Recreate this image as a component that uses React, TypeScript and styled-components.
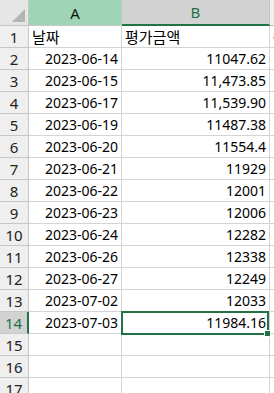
import React from 'react';
import styled, { createGlobalStyle, css } from 'styled-components';

const Colours = {
  grid: '#d4d4d4',
  headerBg: '#efefef',
  headerBorder: '#c6c6c6',
  selectedHeader: '#d2d2d2',
  green: '#217346',
  greenHeader: '#9fd5b7',
  text: '#000',
};

const GlobalStyle = createGlobalStyle`
  html, body {
    margin: 0;
    padding: 0;
    background: #fff;
    overflow: hidden;
  }
  body {
    font-family: "Noto Sans", "Noto Sans CJK KR", sans-serif;
  }
`;

const SSheet = styled.div`
  display: grid;
  grid-template-columns: 29px 93px 148px 1fr;
  grid-auto-rows: 22px;
  grid-template-rows: 26px;
  width: 274px;
  height: 393px;
  overflow: hidden;
  font-size: 14px;
  color: ${Colours.text};
`;

const SCorner = styled.div`
  position: relative;
  background: #e6e6e6;
  border-right: 1px solid ${Colours.headerBorder};
  border-bottom: 1px solid ${Colours.headerBorder};

  &::after {
    content: '';
    position: absolute;
    right: 3px;
    bottom: 3px;
    width: 0;
    height: 0;
    border-left: 13px solid transparent;
    border-bottom: 13px solid #b4b4b4;
  }
`;

type ColHeadProps = { $state?: 'active' | 'selected' };
const SColHead = styled.div<ColHeadProps>`
  display: flex;
  align-items: center;
  justify-content: center;
  background: ${Colours.headerBg};
  border-right: 1px solid ${Colours.headerBorder};
  border-bottom: 1px solid ${Colours.headerBorder};
  font-size: 15px;
  color: #222;

  ${({ $state }) =>
    $state === 'active' &&
    css`
      background: ${Colours.greenHeader};
      color: #111;
    `}

  ${({ $state }) =>
    $state === 'selected' &&
    css`
      background: ${Colours.selectedHeader};
      color: ${Colours.green};
      border-bottom: 2px solid ${Colours.green};
    `}
`;

const SRowHead = styled.div<{ $selected?: boolean }>`
  display: flex;
  align-items: center;
  justify-content: center;
  background: ${Colours.headerBg};
  border-right: 1px solid ${Colours.headerBorder};
  border-bottom: 1px solid ${Colours.headerBorder};
  font-size: 15px;
  color: #222;

  ${({ $selected }) =>
    $selected &&
    css`
      background: ${Colours.selectedHeader};
      color: ${Colours.green};
      border-right: 2px solid ${Colours.green};
    `}
`;

type CellProps = { $align?: 'left' | 'right'; $selected?: boolean; $label?: boolean };
const SCell = styled.div<CellProps>`
  position: relative;
  display: flex;
  align-items: center;
  justify-content: ${({ $align }) => ($align === 'right' ? 'flex-end' : 'flex-start')};
  padding: 0 3px;
  border-right: 1px solid ${Colours.grid};
  border-bottom: 1px solid ${Colours.grid};
  white-space: nowrap;
  overflow: visible;
  font-size: ${({ $label }) => ($label ? '15px' : '14px')};

  ${({ $selected }) =>
    $selected &&
    css`
      z-index: 2;
      &::before {
        content: '';
        position: absolute;
        left: -1px;
        top: -1px;
        right: 0;
        bottom: -2px;
        border: 2px solid ${Colours.green};
        pointer-events: none;
      }
      &::after {
        content: '';
        position: absolute;
        right: -2px;
        bottom: -4px;
        width: 5px;
        height: 5px;
        background: ${Colours.green};
        border: 1px solid #fff;
      }
    `}
`;

const rows: [string, string][] = [
  ['2023-06-14', '11047.62'],
  ['2023-06-15', '11,473.85'],
  ['2023-06-17', '11,539.90'],
  ['2023-06-19', '11487.38'],
  ['2023-06-20', '11554.4'],
  ['2023-06-21', '11929'],
  ['2023-06-22', '12001'],
  ['2023-06-23', '12006'],
  ['2023-06-24', '12282'],
  ['2023-06-26', '12338'],
  ['2023-06-27', '12249'],
  ['2023-07-02', '12033'],
  ['2023-07-03', '11984.16'],
];

const SELECTED_ROW = 14;

const App = () => (
  <>
    <GlobalStyle />
    <SSheet>
      <SCorner />
      <SColHead $state="active">A</SColHead>
      <SColHead $state="selected">B</SColHead>
      <SColHead />

      <SRowHead>1</SRowHead>
      <SCell $label>날짜</SCell>
      <SCell $label>평가금액</SCell>
      <SCell>-</SCell>

      {rows.map(([date, value], i) => {
        const n = i + 2;
        const sel = n === SELECTED_ROW;
        return (
          <React.Fragment key={n}>
            <SRowHead $selected={sel}>{n}</SRowHead>
            <SCell $align="right">{date}</SCell>
            <SCell $align="right" $selected={sel}>
              {value}
            </SCell>
            <SCell />
          </React.Fragment>
        );
      })}

      {[15, 16, 17].map((n) => (
        <React.Fragment key={n}>
          <SRowHead>{n}</SRowHead>
          <SCell />
          <SCell />
          <SCell />
        </React.Fragment>
      ))}
    </SSheet>
  </>
);

export default App;
